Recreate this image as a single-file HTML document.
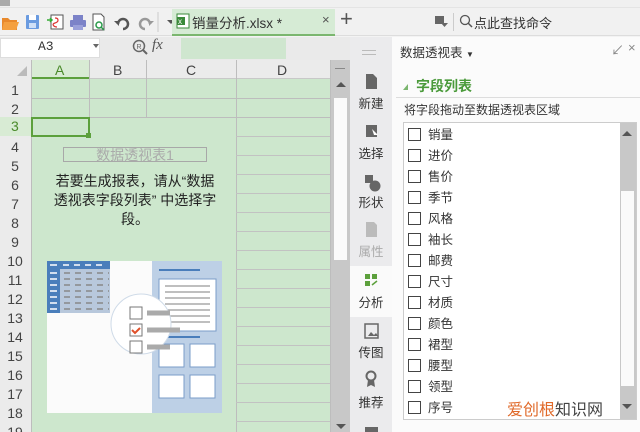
<!DOCTYPE html>
<html><head><meta charset="utf-8"><style>
*{margin:0;padding:0;box-sizing:border-box}
body{width:640px;height:432px;overflow:hidden;background:#f3f3f3;font-family:"Liberation Sans","Noto Sans CJK SC",sans-serif;position:relative;font-size:12px;color:#333}
.a{position:absolute}
.cj{font-family:"Liberation Sans","Noto Sans CJK SC",sans-serif}
</style></head><body>
<div class="a" style="left:0;top:0;width:640px;height:8px;background:#f0f0f0;border-bottom:1px solid #e4e4e4"></div>
<div class="a" style="left:0;top:0;width:10px;height:6px;background:#aaa"></div>
<div class="a" style="left:0;top:8px;width:640px;height:28px;background:#f1f1f1;border-bottom:1px solid #ddd"></div>
<svg class="a" style="left:0;top:10px" width="220" height="24">
<path d="M2 8h6l2 2h7v10H2z" fill="#e8892c"/><path d="M4 12h15l-3 8H2z" fill="#f4a040"/>
<rect x="26" y="5" width="13" height="14" rx="1" fill="#6a9be0"/><rect x="29" y="5" width="7" height="5" fill="#fff"/><rect x="29" y="13" width="7" height="5" fill="#cfe0f7"/>
<rect x="51" y="5" width="12" height="14" fill="#fff" stroke="#555"/><path d="M47 10h5M50 8l2 2-2 2" stroke="#3a3" stroke-width="1.5" fill="none"/><path d="M55 8c4 0 4 4 0 5s-1 4 2 4" stroke="#d33" fill="none" stroke-width="1.2"/>
<rect x="70" y="10" width="16" height="7" rx="1" fill="#7c83c8"/><rect x="73" y="5" width="10" height="5" fill="#7c83c8"/><rect x="73" y="15" width="10" height="5" fill="#9aa0da"/>
<path d="M93 4h8l3 3v13H93z" fill="#fff" stroke="#555"/><circle cx="99" cy="15" r="3" fill="none" stroke="#2a9a4a" stroke-width="1.5"/><path d="M101 17l3 3" stroke="#2a9a4a" stroke-width="1.5"/>
<path d="M118 14a5 5 0 1 1 5 5" stroke="#555" stroke-width="2.5" fill="none"/><path d="M114 11l5 0 0 5z" fill="#555"/>
<path d="M150 14a5 5 0 1 0-5 5" stroke="#999" stroke-width="2.5" fill="none"/><path d="M154 11l-5 0 0 5z" fill="#999"/>
<line x1="158" y1="2" x2="158" y2="22" stroke="#ccc"/>
<path d="M167 10h8l-4 4z" fill="#555"/>
<path d="M188 5l3 11 3-8 3 8 3-11M198 5l3 11 3-8 3 8 3-11" stroke="#e02a2a" stroke-width="2.2" fill="none"/>
</svg>
<div class="a" style="left:172px;top:9px;width:163px;height:27px;background:#d6ebd5;border-bottom:2px solid #7bb66f"></div>
<svg class="a" style="left:176px;top:13px" width="14" height="16"><rect x="1" y="1" width="12" height="14" fill="#fff" stroke="#3a8a3a"/><rect x="1" y="4" width="8" height="8" fill="#3a8a3a"/><text x="2" y="11" font-size="8" fill="#fff" font-family="Liberation Sans">x</text></svg>
<div class="a cj" style="left:192px;top:12px;font-size:13.5px;color:#333">销量分析.xlsx *</div>
<div class="a" style="left:322px;top:12px;font-size:13px;color:#555">×</div>
<div class="a" style="left:340px;top:6px;font-size:22px;color:#555">+</div>
<svg class="a" style="left:434px;top:14px" width="14" height="14"><rect x="1" y="2" width="9" height="8" fill="#666"/><path d="M7 9h7l-3.5 4z" fill="#666"/></svg>
<div class="a" style="left:453px;top:13px;width:1px;height:18px;background:#ccc"></div>
<svg class="a" style="left:459px;top:14px" width="14" height="14"><circle cx="6" cy="6" r="4.5" fill="none" stroke="#555" stroke-width="1.3"/><path d="M9 9l4 4" stroke="#555" stroke-width="1.5"/></svg>
<div class="a cj" style="left:474px;top:13px;font-size:13px;color:#333;white-space:nowrap">点此查找命令</div>
<div class="a" style="left:0;top:37px;width:350px;height:23px;background:#eaeaea"></div>
<div class="a" style="left:0;top:38px;width:100px;height:20px;background:#fff;border:1px solid #ddd"></div>
<div class="a" style="left:38px;top:39px;font-size:13px;font-family:'Liberation Mono',monospace">A3</div>
<div class="a" style="left:93px;top:44px;width:0;height:0;border-left:3px solid transparent;border-right:3px solid transparent;border-top:4px solid #666"></div>
<svg class="a" style="left:132px;top:39px" width="16" height="18"><circle cx="7" cy="7" r="5.5" fill="none" stroke="#666" stroke-width="1.5"/><path d="M11 11l4 4" stroke="#666" stroke-width="2"/><text x="4.5" y="10" font-size="7" fill="#666">R</text></svg>
<div class="a" style="left:152px;top:37px;font-size:15px;font-style:italic;font-family:'Liberation Serif',serif;color:#555">fx</div>
<div class="a" style="left:181px;top:38px;width:105px;height:21px;background:#cfe6cf"></div>
<div class="a" style="left:0;top:60px;width:333px;height:372px;background:#cde7cd"></div>
<div class="a" style="left:0;top:60px;width:31px;height:372px;background:#ebebeb"></div>
<div class="a" style="left:31px;top:60px;width:302px;height:19px;background:#ebebeb;border-bottom:1px solid #c8c8c8"></div>
<div class="a" style="left:31px;top:60px;width:58px;height:19px;background:#d8ebd4;border-bottom:2px solid #5ca03c"></div>
<div class="a" style="left:17px;top:66px;width:0;height:0;border-left:10px solid transparent;border-bottom:10px solid #bbb"></div>
<div class="a" style="left:55px;top:62px;font-size:14px;color:#4a8a2a">A</div>
<div class="a" style="left:113px;top:62px;font-size:14px;color:#444">B</div>
<div class="a" style="left:186px;top:62px;font-size:14px;color:#444">C</div>
<div class="a" style="left:277px;top:62px;font-size:14px;color:#444">D</div>
<svg class="a" style="left:0;top:60px" width="333" height="372">
<g stroke="#bdbdbd" stroke-width="1">
<line x1="31.5" y1="0" x2="31.5" y2="372"/>
<line x1="89.5" y1="0" x2="89.5" y2="57"/><line x1="146.5" y1="0" x2="146.5" y2="57"/>
<line x1="236.5" y1="0" x2="236.5" y2="372"/><line x1="330.5" y1="0" x2="330.5" y2="372"/>
<line x1="31" y1="38.5" x2="330" y2="38.5"/><line x1="31" y1="57.5" x2="330" y2="57.5"/>
</g>
<g stroke="#c2c2c2">
<line x1="236" y1="76.5" x2="330" y2="76.5"/><line x1="236" y1="95.5" x2="330" y2="95.5"/><line x1="236" y1="114.5" x2="330" y2="114.5"/><line x1="236" y1="133.5" x2="330" y2="133.5"/><line x1="236" y1="152.5" x2="330" y2="152.5"/><line x1="236" y1="171.5" x2="330" y2="171.5"/><line x1="236" y1="190.5" x2="330" y2="190.5"/><line x1="236" y1="209.5" x2="330" y2="209.5"/><line x1="236" y1="228.5" x2="330" y2="228.5"/><line x1="236" y1="247.5" x2="330" y2="247.5"/><line x1="236" y1="266.5" x2="330" y2="266.5"/><line x1="236" y1="285.5" x2="330" y2="285.5"/><line x1="236" y1="304.5" x2="330" y2="304.5"/><line x1="236" y1="323.5" x2="330" y2="323.5"/><line x1="236" y1="342.5" x2="330" y2="342.5"/><line x1="236" y1="361.5" x2="330" y2="361.5"/>
</g>
<g font-size="14" fill="#444" font-family="Liberation Sans" text-anchor="middle">
<text x="15" y="35">1</text><text x="15" y="54">2</text><text x="15" y="92">4</text><text x="15" y="111">5</text><text x="15" y="130">6</text><text x="15" y="149">7</text><text x="15" y="168">8</text><text x="15" y="187">9</text><text x="15" y="206">10</text><text x="15" y="225">11</text><text x="15" y="244">12</text><text x="15" y="263">13</text><text x="15" y="282">14</text><text x="15" y="301">15</text><text x="15" y="320">16</text><text x="15" y="339">17</text><text x="15" y="358">18</text><text x="15" y="377">19</text>
</g>
</svg>
<div class="a" style="left:0;top:117px;width:31px;height:19px;background:#d8ebd4"></div>
<div class="a" style="left:11px;top:118px;font-size:14px;color:#4a8a2a">3</div>
<div class="a" style="left:31px;top:117px;width:59px;height:20px;border:2px solid #5ca03c"></div>
<div class="a" style="left:86px;top:133px;width:5px;height:5px;background:#5ca03c"></div>
<div class="a" style="left:63px;top:147px;width:144px;height:15px;border:1px solid #a8a8a8"></div>
<div class="a cj" style="left:63px;top:145px;width:144px;text-align:center;font-size:14px;color:#aaa">数据透视表1</div>
<div class="a cj" style="left:30px;top:172px;width:210px;text-align:center;font-size:14px;line-height:19px;color:#222;white-space:nowrap">若要生成报表，请从“数据<br>透视表字段列表” 中选择字<br>段。</div>
<svg class="a" style="left:47px;top:261px" width="175" height="152">
<rect width="175" height="152" fill="#fbfbfb"/>
<rect x="105" y="0" width="70" height="152" fill="#bdd0e6"/>
<rect x="0" y="0" width="63" height="8" fill="#4a7ebb"/><rect x="0" y="0" width="13" height="52" fill="#4a7ebb"/>
<rect x="13" y="8" width="50" height="44" fill="#b8c8dc"/>
<g stroke="#fff" stroke-width="1.5"><line x1="3" y1="4" x2="10" y2="4"/><line x1="16" y1="4" x2="22" y2="4"/><line x1="27" y1="4" x2="33" y2="4"/><line x1="38" y1="4" x2="44" y2="4"/><line x1="49" y1="4" x2="55" y2="4"/>
<line x1="3" y1="12" x2="10" y2="12"/><line x1="3" y1="18" x2="10" y2="18"/><line x1="3" y1="24" x2="10" y2="24"/><line x1="3" y1="30" x2="10" y2="30"/><line x1="3" y1="36" x2="10" y2="36"/><line x1="3" y1="42" x2="10" y2="42"/><line x1="3" y1="48" x2="10" y2="48"/></g>
<g stroke="#888" stroke-width="1.5" stroke-dasharray="6 5"><line x1="17" y1="12" x2="62" y2="12"/><line x1="17" y1="18" x2="62" y2="18"/><line x1="17" y1="24" x2="62" y2="24"/><line x1="17" y1="30" x2="62" y2="30"/><line x1="17" y1="36" x2="62" y2="36"/><line x1="17" y1="42" x2="62" y2="42"/><line x1="17" y1="48" x2="62" y2="48"/></g>
<line x1="112" y1="9" x2="153" y2="9" stroke="#4a7ebb" stroke-width="2"/>
<rect x="112" y="18" width="57" height="52" fill="#fff" stroke="#7a9cc8"/>
<g stroke="#aaa" stroke-width="1.5"><line x1="118" y1="25" x2="163" y2="25"/><line x1="118" y1="31" x2="163" y2="31"/><line x1="118" y1="37" x2="163" y2="37"/><line x1="118" y1="43" x2="163" y2="43"/><line x1="118" y1="49" x2="163" y2="49"/><line x1="118" y1="55" x2="163" y2="55"/><line x1="118" y1="61" x2="163" y2="61"/></g>
<line x1="112" y1="76" x2="153" y2="76" stroke="#4a7ebb" stroke-width="2"/>
<rect x="112" y="83" width="25" height="23" fill="#fff" stroke="#7a9cc8"/><rect x="143" y="83" width="25" height="23" fill="#fff" stroke="#7a9cc8"/>
<rect x="112" y="114" width="25" height="23" fill="#fff" stroke="#7a9cc8"/><rect x="143" y="114" width="25" height="23" fill="#fff" stroke="#7a9cc8"/>
<circle cx="94" cy="63" r="30" fill="#fff" stroke="#cfdbe8"/>
<rect x="83" y="46" width="12" height="12" fill="#fff" stroke="#777"/><rect x="83" y="63" width="12" height="12" fill="#fff" stroke="#777"/><rect x="83" y="80" width="12" height="12" fill="#fff" stroke="#777"/>
<path d="M85 69l3 3 5-5" stroke="#e0502a" stroke-width="2" fill="none"/>
<g stroke="#aaa" stroke-width="5"><line x1="100" y1="52" x2="123" y2="52"/><line x1="100" y1="69" x2="133" y2="69"/><line x1="100" y1="86" x2="123" y2="86"/></g>
</svg>
<div class="a" style="left:331px;top:60px;width:19px;height:372px;background:#c8c8c8"></div>
<div class="a" style="left:334px;top:98px;width:13px;height:162px;background:#fafafa"></div>
<div class="a" style="left:335px;top:68px;width:10px;height:1px;background:#888"></div>
<div class="a" style="left:336px;top:82px;border-left:5px solid transparent;border-right:5px solid transparent;border-bottom:5px solid #555"></div>
<div class="a" style="left:336px;top:424px;border-left:5px solid transparent;border-right:5px solid transparent;border-top:5px solid #555"></div>
<div class="a" style="left:350px;top:37px;width:42px;height:395px;background:#ebebed"></div>
<div class="a" style="left:350px;top:266px;width:42px;height:51px;background:#fafafa"></div>
<div class="a" style="left:362px;top:50px;width:14px;height:1px;background:#bbb"></div>
<div class="a" style="left:362px;top:54px;width:14px;height:1px;background:#bbb"></div>
<svg class="a" style="left:350px;top:70px" width="42" height="362">
<path d="M16 4h7l4 4v11H16z" fill="#666"/>
<rect x="16" y="55" width="11" height="12" fill="#666"/><path d="M22 59l6 6h-4z" fill="#fff"/>
<rect x="15" y="105" width="8" height="8" fill="#666"/><circle cx="25" cy="116" r="5.5" fill="#666"/>
<path d="M16 152h8l3 3v12H16z" fill="#bbb"/>
<rect x="15" y="204" width="5" height="5" fill="#5ca03c"/><rect x="22" y="204" width="5" height="5" fill="#5ca03c"/><rect x="15" y="211" width="5" height="5" fill="#5ca03c"/><path d="M22 215l5-4" stroke="#5ca03c" stroke-width="1.5"/>
<rect x="15" y="254" width="13" height="14" fill="none" stroke="#666" stroke-width="1.5"/><path d="M18 266l3-4 3 3 2-2 2 3z" fill="#666"/>
<circle cx="21" cy="306" r="4.5" fill="none" stroke="#666" stroke-width="2"/><path d="M18 310l-1 7 4-2 4 2-1-7" fill="#666"/>
<rect x="15" y="357" width="13" height="6" fill="#666"/>
</svg>
<div class="a cj" style="left:350px;top:93px;width:42px;text-align:center;font-size:12.5px;color:#333">新建</div>
<div class="a cj" style="left:350px;top:143px;width:42px;text-align:center;font-size:12.5px;color:#333">选择</div>
<div class="a cj" style="left:350px;top:192px;width:42px;text-align:center;font-size:12.5px;color:#333">形状</div>
<div class="a cj" style="left:350px;top:241px;width:42px;text-align:center;font-size:12.5px;color:#aaa">属性</div>
<div class="a cj" style="left:350px;top:292px;width:42px;text-align:center;font-size:12.5px;color:#333">分析</div>
<div class="a cj" style="left:350px;top:342px;width:42px;text-align:center;font-size:12.5px;color:#333">传图</div>
<div class="a cj" style="left:350px;top:392px;width:42px;text-align:center;font-size:12.5px;color:#333">推荐</div>
<div class="a" style="left:392px;top:37px;width:248px;height:395px;background:#fbfbfb"></div>
<div class="a cj" style="left:400px;top:42px;font-size:12.5px;color:#333">数据透视表 <span style="font-size:8px">▼</span></div>
<div class="a" style="left:611px;top:40px;font-size:13px;color:#888">↙</div>
<div class="a" style="left:628px;top:40px;font-size:13px;color:#888">×</div>
<div class="a" style="left:403px;top:84px;border-left:5px solid transparent;border-bottom:6px solid #7bb66f"></div>
<div class="a cj" style="left:416px;top:76px;font-size:14px;font-weight:bold;color:#4a9a3a">字段列表</div>
<div class="a" style="left:396px;top:97px;width:244px;height:1px;background:#ddd"></div>
<div class="a cj" style="left:404px;top:101px;font-size:12px;color:#333">将字段拖动至数据透视表区域</div>
<div class="a" style="left:403px;top:122px;width:234px;height:298px;background:#fff;border:1px solid #ccc"></div>
<div class="a" style="left:620px;top:123px;width:16px;height:296px;background:#c8c8c8"></div>
<div class="a" style="left:621px;top:191px;width:13px;height:195px;background:#fafafa"></div>
<div class="a" style="left:622px;top:131px;border-left:5px solid transparent;border-right:5px solid transparent;border-bottom:5px solid #555"></div>
<div class="a" style="left:622px;top:404px;border-left:5px solid transparent;border-right:5px solid transparent;border-top:5px solid #555"></div>
<div class="a cj" style="left:408px;top:125px;font-size:12.5px;line-height:21px;color:#333">
<div><span style="display:inline-block;width:13px;height:13px;border:1.5px solid #444;vertical-align:-2px;margin-right:7px"></span>销量</div>
<div><span style="display:inline-block;width:13px;height:13px;border:1.5px solid #444;vertical-align:-2px;margin-right:7px"></span>进价</div>
<div><span style="display:inline-block;width:13px;height:13px;border:1.5px solid #444;vertical-align:-2px;margin-right:7px"></span>售价</div>
<div><span style="display:inline-block;width:13px;height:13px;border:1.5px solid #444;vertical-align:-2px;margin-right:7px"></span>季节</div>
<div><span style="display:inline-block;width:13px;height:13px;border:1.5px solid #444;vertical-align:-2px;margin-right:7px"></span>风格</div>
<div><span style="display:inline-block;width:13px;height:13px;border:1.5px solid #444;vertical-align:-2px;margin-right:7px"></span>袖长</div>
<div><span style="display:inline-block;width:13px;height:13px;border:1.5px solid #444;vertical-align:-2px;margin-right:7px"></span>邮费</div>
<div><span style="display:inline-block;width:13px;height:13px;border:1.5px solid #444;vertical-align:-2px;margin-right:7px"></span>尺寸</div>
<div><span style="display:inline-block;width:13px;height:13px;border:1.5px solid #444;vertical-align:-2px;margin-right:7px"></span>材质</div>
<div><span style="display:inline-block;width:13px;height:13px;border:1.5px solid #444;vertical-align:-2px;margin-right:7px"></span>颜色</div>
<div><span style="display:inline-block;width:13px;height:13px;border:1.5px solid #444;vertical-align:-2px;margin-right:7px"></span>裙型</div>
<div><span style="display:inline-block;width:13px;height:13px;border:1.5px solid #444;vertical-align:-2px;margin-right:7px"></span>腰型</div>
<div><span style="display:inline-block;width:13px;height:13px;border:1.5px solid #444;vertical-align:-2px;margin-right:7px"></span>领型</div>
<div><span style="display:inline-block;width:13px;height:13px;border:1.5px solid #444;vertical-align:-2px;margin-right:7px"></span>序号</div>
</div>
<div class="a cj" style="left:507px;top:396px;font-size:16px;color:#e06a2a;white-space:nowrap">爱创根<span style="color:#444">知识网</span></div>
</body></html>
